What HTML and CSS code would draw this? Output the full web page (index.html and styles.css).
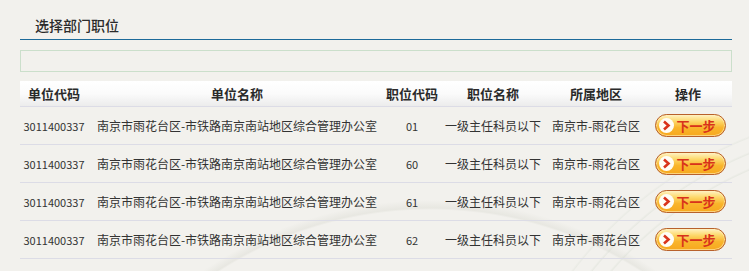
FILE: index.html
```html
<!DOCTYPE html>
<html lang="zh-CN">
<head>
<meta charset="utf-8">
<title>选择部门职位</title>
<link rel="stylesheet" href="styles.css">
</head>
<body>
<div class="page">
  <div class="title">选择部门职位</div>
  <div class="filter"></div>
  <table class="grid">
    <thead>
      <tr>
        <th class="c1">单位代码</th>
        <th class="c2">单位名称</th>
        <th class="c3">职位代码</th>
        <th class="c4">职位名称</th>
        <th class="c5">所属地区</th>
        <th class="c6">操作</th>
      </tr>
    </thead>
    <tbody>
      <tr>
        <td class="num">3011400337</td>
        <td>南京市雨花台区-市铁路南京南站地区综合管理办公室</td>
        <td class="num">01</td>
        <td>一级主任科员以下</td>
        <td>南京市-雨花台区</td>
        <td><a class="next" href="#"><span class="ico"><svg width="13" height="13" viewBox="0 0 13 13"><path d="M4 2.5 L8.5 6.5 L4 10.5" fill="none" stroke="#d9341c" stroke-width="2.6" stroke-linejoin="miter"/></svg></span><span class="lbl">下一步</span></a></td>
      </tr>
      <tr>
        <td class="num">3011400337</td>
        <td>南京市雨花台区-市铁路南京南站地区综合管理办公室</td>
        <td class="num">60</td>
        <td>一级主任科员以下</td>
        <td>南京市-雨花台区</td>
        <td><a class="next" href="#"><span class="ico"><svg width="13" height="13" viewBox="0 0 13 13"><path d="M4 2.5 L8.5 6.5 L4 10.5" fill="none" stroke="#d9341c" stroke-width="2.6" stroke-linejoin="miter"/></svg></span><span class="lbl">下一步</span></a></td>
      </tr>
      <tr>
        <td class="num">3011400337</td>
        <td>南京市雨花台区-市铁路南京南站地区综合管理办公室</td>
        <td class="num">61</td>
        <td>一级主任科员以下</td>
        <td>南京市-雨花台区</td>
        <td><a class="next" href="#"><span class="ico"><svg width="13" height="13" viewBox="0 0 13 13"><path d="M4 2.5 L8.5 6.5 L4 10.5" fill="none" stroke="#d9341c" stroke-width="2.6" stroke-linejoin="miter"/></svg></span><span class="lbl">下一步</span></a></td>
      </tr>
      <tr>
        <td class="num">3011400337</td>
        <td>南京市雨花台区-市铁路南京南站地区综合管理办公室</td>
        <td class="num">62</td>
        <td>一级主任科员以下</td>
        <td>南京市-雨花台区</td>
        <td><a class="next" href="#"><span class="ico"><svg width="13" height="13" viewBox="0 0 13 13"><path d="M4 2.5 L8.5 6.5 L4 10.5" fill="none" stroke="#d9341c" stroke-width="2.6" stroke-linejoin="miter"/></svg></span><span class="lbl">下一步</span></a></td>
      </tr>
    </tbody>
  </table>
</div>
</body>
</html>
```
FILE: styles.css
```css
html, body {
  margin: 0;
  padding: 0;
}
body {
  background-color: #f2f1ed;
  background-image:
    radial-gradient(circle at 900px 520px, transparent 380px, rgba(200,210,195,0.25) 381px, transparent 383px, transparent 395px, rgba(200,210,195,0.25) 396px, transparent 398px, transparent 410px, rgba(200,210,195,0.2) 411px, transparent 413px),
    radial-gradient(circle at 430px 600px, transparent 390px, rgba(225,225,218,0.6) 392px, transparent 400px);
  font-family: "Noto Sans CJK SC", "Liberation Sans", sans-serif;
  color: #333;
  height: 271px;
  overflow: hidden;
}
.page {
  width: 712px;
  margin-left: 20px;
}
.title {
  display: flex;
  align-items: center;
  height: 29px;
  padding-top: 10px;
  padding-left: 15px;
  border-bottom: 1px solid #1d6a99;
  font-size: 14px;
  line-height: 18px;
  font-weight: 500;
  color: #2b2b2b;
}
.filter {
  margin-top: 10px;
  height: 20px;
  border: 1px solid #cbdfcb;
}
.grid {
  margin-top: 9px;
  width: 712px;
  border-collapse: collapse;
  table-layout: fixed;
  font-size: 12px;
}
.grid th {
  height: 25px;
  padding: 0;
  font-size: 13px;
  font-weight: bold;
  color: #2a2a2a;
  background: linear-gradient(#ffffff 0%, #fbfbfb 50%, #ececec 100%);
  border-bottom: 1px solid #dcdce6;
  text-align: center;
}
.grid th.c1 { width: 68px; }
.grid th.c2 { width: 298px; }
.grid th.c3 { width: 52px; }
.grid th.c4 { width: 110px; }
.grid th.c5 { width: 96px; }
.grid th.c6 { width: 88px; }
.grid td {
  height: 37px;
  padding: 0;
  border-bottom: 1px solid #dcdce6;
  text-align: center;
  color: #333;
  white-space: nowrap;
}
.grid td.num {
  font-size: 11px;
}
.next {
  display: inline-flex;
  align-items: center;
  width: 69px;
  height: 21px;
  border: 1px solid #b8612c;
  border-radius: 12px;
  background: linear-gradient(#fff2c2 0%, #fdd86a 30%, #f9b52c 60%, #f7a81e 100%);
  text-decoration: none;
  box-shadow: inset 0 0 0 1px rgba(255,240,190,0.6);
  margin-left: 4px;
  vertical-align: middle;
}
.ico {
  width: 15px;
  height: 15px;
  border-radius: 50%;
  background: #fffdf6;
  margin-left: 3px;
  display: flex;
  align-items: center;
  justify-content: center;
}
.lbl {
  margin-left: 3px;
  font-size: 13px;
  font-weight: bold;
  color: #d8321b;
  line-height: 1;
}
```
